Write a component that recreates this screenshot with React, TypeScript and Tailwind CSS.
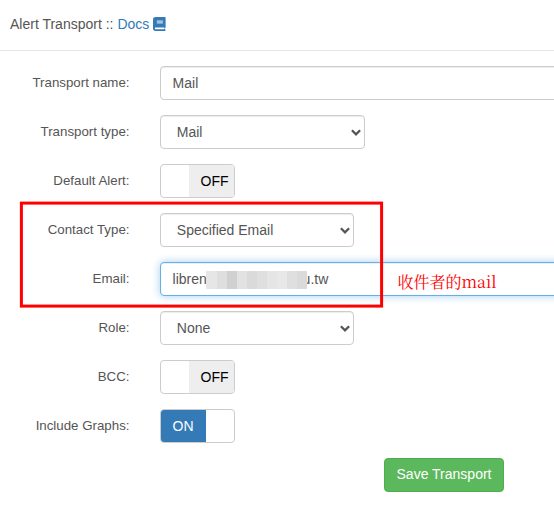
import type { ReactNode } from "react";

function Row({ label, children }: { label: string; children: ReactNode }) {
  return (
    <div className="flex h-[34px]">
      <div className="w-[129.500px] shrink-0 pt-[7px] text-right text-[13.300px] leading-[20px]">{label}</div>
      <div className="ml-[30.500px] flex grow">{children}</div>
    </div>
  );
}

const field =
  "flex h-[34px] items-center rounded-[4px] border border-[#ccc] bg-white shadow-[inset_0_1px_1px_rgba(0,0,0,0.075)] shrink-0";

function Select({ value, wide = false }: { value: string; wide?: boolean }) {
  return (
    <div className={`${field} justify-between pl-[15.800px] pr-[3px] ${wide ? "w-[205px]" : "w-[194px]"}`}>
      <span>{value}</span>
      <svg width="10" height="8" viewBox="0 0 10 8" fill="none" className="mt-px">
        <path d="M0.900 1.300 L5 5.300 L9.100 1.300" stroke="#555" strokeWidth="2.300" />
      </svg>
    </div>
  );
}

function Toggle({ on = false }: { on?: boolean }) {
  return (
    <div className="flex h-[34px] w-[75px] overflow-hidden rounded-[4px] border border-[#ccc] bg-white">
      {on ? (
        <div className="flex w-[45px] items-center justify-center bg-[#337ab7] pr-[0.800px] text-white">ON</div>
      ) : (
        <div className="ml-7 flex w-[45px] items-center justify-end bg-[#eee] pr-[5.400px] text-black">OFF</div>
      )}
    </div>
  );
}

function RedactedText() {
  return (
    <div className="absolute left-[45px] top-[8px] flex h-[18px] w-[101px] overflow-hidden">
      <div className="w-[11px] bg-[#e6e6e6]" />
      <div className="w-[10px] bg-[#dedede]" />
      <div className="w-[10px] bg-[#d0d0d0]" />
      <div className="w-[10px] bg-[#e2e2e2]" />
      <div className="w-[10px] bg-[#dadada]" />
      <div className="w-[10px] bg-[#dfdfdf]" />
      <div className="w-[10px] bg-[#e5e5e5]" />
      <div className="w-[10px] bg-[#e8e8e8]" />
      <div className="w-[10px] bg-[#dfdfdf]" />
      <div className="w-[10px] bg-[#dadada]" />
    </div>
  );
}

export default function App() {
  return (
    <div className="relative h-[511px] w-[554px] overflow-hidden bg-white font-['Liberation_Sans',Arial,sans-serif] text-[14px] leading-[20px] text-[#555]">
      <header className="flex h-[51px] items-center gap-1 border-b border-[#e5e5e5] pb-[3px] pl-[10px]">
        <span>
          Alert Transport :: <span className="text-[#337ab7]">Docs</span>
        </span>
        <svg width="13" height="14" viewBox="0 0 13 14">
          <path
            d="M2.700 0H11.800Q12.600 0 12.600 0.800V10Q12.600 10.500 12.100 10.900V12.400Q12.600 12.600 12.600 13.200Q12.600 14 11.800 14H2.700Q0 14 0 11.300V2.700Q0 0 2.700 0Z"
            fill="#337ab7"
          />
          <path d="M3.800 4.100H9.900M3.800 5.900H9.900" stroke="#fff" strokeWidth="0.900" />
          <path d="M2.600 11.400H10.900" stroke="#fff" strokeWidth="1.600" strokeLinecap="round" />
        </svg>
      </header>

      <main className="flex flex-col gap-[15px] pt-[15px]">
        <Row label="Transport name:">
          <div className={`${field} w-[500px] pl-[11.600px]`}>Mail</div>
        </Row>
        <Row label="Transport type:">
          <Select value="Mail" wide />
        </Row>
        <Row label="Default Alert:">
          <Toggle />
        </Row>
        <Row label="Contact Type:">
          <Select value="Specified Email" />
        </Row>
        <Row label="Email:">
          <div className="relative flex h-[34px] w-[500px] shrink-0 items-center rounded-[4px] border border-[#66afe9] bg-white pl-[11.600px] shadow-[inset_0_1px_1px_rgba(0,0,0,0.075),0_0_8px_rgba(102,175,233,0.6)]">
            <span className="w-[130px]">libren</span>
            <span>u.tw</span>
            <RedactedText />
          </div>
        </Row>
        <Row label="Role:">
          <Select value="None" />
        </Row>
        <Row label="BCC:">
          <Toggle />
        </Row>
        <Row label="Include Graphs:">
          <Toggle on />
        </Row>
        <button className="ml-[384px] h-[34px] w-[120px] rounded-[4px] border border-[#4cae4c] bg-[#5cb85c] pb-[2px] text-white">
          Save Transport
        </button>
      </main>

      <svg
        className="absolute left-[19px] top-[200px]"
        width="366"
        height="110"
        viewBox="0 0 366 110"
        fill="none"
      >
        <rect x="2.400" y="3.100" width="360.200" height="103" stroke="#f00" strokeWidth="3" />
      </svg>
      <div className="absolute left-[397.500px] top-[272px] whitespace-nowrap font-['Noto_Serif_CJK_TC','Noto_Serif_CJK_SC','Noto_Serif','Liberation_Serif','Noto_Sans_CJK_TC',serif] text-[16px] leading-[20px] text-[#f00]">
        收件者的mail
      </div>
    </div>
  );
}
